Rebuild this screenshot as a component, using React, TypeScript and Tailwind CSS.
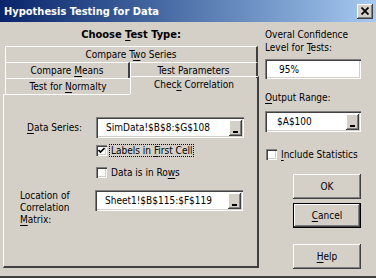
import type { ReactNode } from 'react';

const raised =
  'shadow-[inset_-1px_-1px_0_#404040,inset_1px_1px_0_#ffffff,inset_-2px_-2px_0_#808080]';
const sunken =
  'shadow-[inset_1px_1px_0_#808080,inset_2px_2px_0_#404040,inset_-1px_-1px_0_#ffffff,inset_-2px_-2px_0_#d4d0c8]';

function U({ children }: { children: ReactNode }) {
  return <span className="underline underline-offset-2">{children}</span>;
}

function RefButton() {
  return (
    <div className={`w-[13px] h-[16px] bg-[#d4d0c8] flex items-end justify-center pb-[3px] ${raised}`}>
      <div className="w-[5px] h-[2px] bg-black" />
    </div>
  );
}

function RefEdit({ value, width, indent }: { value: string; width: string; indent: string }) {
  return (
    <div className={`${width} h-[21px] bg-white flex items-center pr-[2px] ${sunken}`}>
      <span className={`flex-1 ${indent}`}>{value}</span>
      <RefButton />
    </div>
  );
}

function Check({ checked }: { checked?: boolean }) {
  return (
    <div className={`w-[11px] h-[11px] bg-white flex items-center justify-center ${sunken}`}>
      {checked && (
        <svg width="7" height="7" viewBox="0 0 7 7">
          <path d="M0.5 3 L2.5 5 L6.5 1" stroke="#000" strokeWidth="1.6" fill="none" />
        </svg>
      )}
    </div>
  );
}

function Tab({ children, className }: { children: ReactNode; className?: string }) {
  return (
    <div
      className={`h-[16px] flex items-center justify-center border-t border-l border-white border-r-2 border-r-[#404040] ${className ?? ''}`}
    >
      <span>{children}</span>
    </div>
  );
}

function Btn({ children, focus }: { children: ReactNode; focus?: boolean }) {
  return (
    <div className={`w-[68px] h-[25px] flex ${focus ? 'border border-black' : ''}`}>
      <div className={`w-full h-full flex items-center justify-center ${raised}`}>
        <span>{children}</span>
      </div>
    </div>
  );
}

export default function App() {
  return (
    <div
      className="w-[376px] h-[278px] bg-[#d4d0c8] text-black text-[10px] leading-[13px] border-b-2 border-b-[#404040] flex flex-col overflow-hidden"
      style={{ fontFamily: '"DejaVu Sans Condensed", "Liberation Sans", sans-serif' }}
    >
      {/* title bar */}
      <div className="h-[22px] shrink-0 bg-gradient-to-r from-[#0a246a] to-[#a6caf0] flex items-center pl-[4px] pr-[3px]">
        <span className="flex-1 text-white font-bold text-[11px]">Hypothesis Testing for Data</span>
        <div className={`w-[16px] h-[15px] bg-[#d4d0c8] flex items-center justify-center ${raised}`}>
          <svg width="8" height="8" viewBox="0 0 8 8">
            <path d="M0.5 0.5 L7.5 7.5 M7.5 0.5 L0.5 7.5" stroke="#000" strokeWidth="1.8" />
          </svg>
        </div>
      </div>

      <div className="flex flex-1">
        {/* left column */}
        <div className="w-[256px] ml-[3px] flex flex-col">
          <div className="h-[24px] flex items-center justify-center font-bold text-[11px]">
            <span>
              Choose <U>T</U>est Type:
            </span>
          </div>
          <Tab className="ml-[2px] mr-[1px]">
            Compare T<U>w</U>o Series
          </Tab>
          <div className="flex ml-[2px] mr-[1px]">
            <Tab className="w-[125px]">
              Compare <U>M</U>eans
            </Tab>
            <Tab className="flex-1">
              Test <U>P</U>arameters
            </Tab>
          </div>
          <div className="flex ml-[2px] h-[16px]">
            <div className="w-[125px] h-[16px] flex items-center justify-center border-t border-l border-white">
              <span>
                Test for <U>N</U>ormalty
              </span>
            </div>
            <div className="flex-1 -mt-[2px] h-[18px] flex items-start justify-center pt-[1px] border-t border-l border-white border-r-2 border-r-[#404040]">
              <span>
                Chec<U>k</U> Correlation
              </span>
            </div>
          </div>
          {/* panel */}
          <div className="flex-1 mb-[8px] flex flex-col border-l border-white border-r-2 border-r-[#404040] border-b-2 border-b-[#404040] relative">
            <div className="absolute top-0 left-0 w-[126px] h-px bg-white" />
            <div className="flex items-center mt-[23px]">
              <span className="w-[92px] pl-[23px]">
                <U>D</U>ata Series:
              </span>
              <RefEdit value="SimData!$B$8:$G$108" width="w-[148px]" indent="pl-[10px]" />
            </div>
            <div className="flex items-center mt-[6px] ml-[92px]">
              <Check checked />
              <span className="ml-[2px] px-[1px] border border-dotted border-black leading-[11px]">
                Labels in <U>F</U>irst Cell
              </span>
            </div>
            <div className="flex items-center mt-[9px] ml-[92px]">
              <Check />
              <span className="ml-[4px]">
                Data is in Ro<U>w</U>s
              </span>
            </div>
            <div className="flex items-start mt-[11px]">
              <span className="w-[91px] pl-[16px] leading-[12px]">
                Location of
                <br />
                Correlation
                <br />
                <U>M</U>atrix:
              </span>
              <RefEdit value="Sheet1!$B$115:$F$119" width="w-[148px]" indent="pl-[10px]" />
            </div>
          </div>
        </div>

        {/* right column */}
        <div className="flex-1 flex flex-col pl-[6px] pt-[6px]">
          <div className="leading-[13px]">
            Overal Confidence
            <br />
            Level for <U>T</U>ests:
          </div>
          <div className={`mt-[5px] w-[96px] h-[20px] bg-white flex items-center pl-[14px] ${sunken}`}>95%</div>
          <div className="mt-[12px]">
            <U>O</U>utput Range:
          </div>
          <div className="mt-[7px]">
            <RefEdit value="$A$100" width="w-[96px]" indent="pl-[12px]" />
          </div>
          <div className="flex items-center mt-[16px] ml-[1px]">
            <Check />
            <span className="ml-[4px]">
              <U>I</U>nclude Statistics
            </span>
          </div>
          <div className="flex flex-col items-start ml-[28px] mt-[13px]">
            <Btn>OK</Btn>
            <div className="mt-[4px]">
              <Btn focus>
                <U>C</U>ancel
              </Btn>
            </div>
            <div className="mt-[16px]">
              <Btn>
                <U>H</U>elp
              </Btn>
            </div>
          </div>
        </div>
      </div>
    </div>
  );
}
